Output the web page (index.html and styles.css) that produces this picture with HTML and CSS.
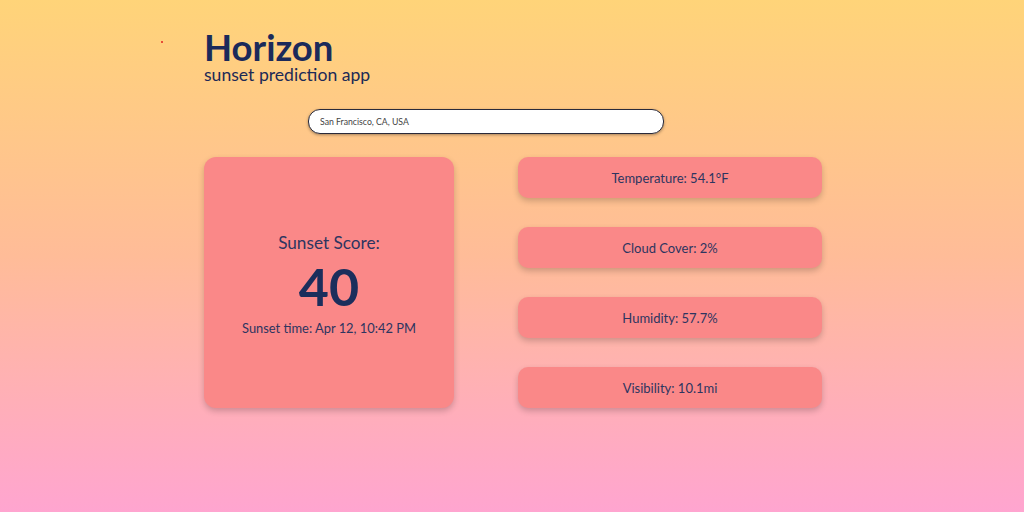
FILE: index.html
```html
<!DOCTYPE html>
<html>
<head>
<meta charset="utf-8">
<link rel="stylesheet" href="styles.css">
</head>
<body>
<div class="page">
  <span class="dot"></span>
  <header class="header">
    <h1 class="title">Horizon</h1>
    <p class="subtitle">sunset prediction app</p>
  </header>
  <div class="search-row">
    <input class="search" type="text" value="San Francisco, CA, USA">
  </div>
  <main class="content">
    <section class="score-card">
      <div class="score-label">Sunset Score:</div>
      <div class="score-value">40</div>
      <div class="score-time">Sunset time: Apr 12, 10:42 PM</div>
    </section>
    <section class="stats">
      <div class="stat">Temperature: 54.1°F</div>
      <div class="stat">Cloud Cover: 2%</div>
      <div class="stat">Humidity: 57.7%</div>
      <div class="stat">Visibility: 10.1mi</div>
    </section>
  </main>
</div>
</body>
</html>
```
FILE: styles.css
```css
html, body {
  margin: 0;
  padding: 0;
  height: 100%;
}
body {
  background: linear-gradient(180deg, #ffd479 0%, #ffbc98 50%, #ffa5d0 100%);
  font-family: Lato, "Noto Sans", sans-serif;
  color: #2d3560;
  min-height: 512px;
}
.page {
  position: relative;
  width: 618px;
  margin-left: calc(50% - 308px);
  padding-top: 29px;
}
.dot {
  position: absolute;
  left: -43px;
  top: 41px;
  width: 2px;
  height: 2px;
  border-radius: 50%;
  background: #e02020;
}
.header {
  display: flex;
  flex-direction: column;
}
.title {
  margin: 0;
  font-size: 36.5px;
  font-weight: 700;
  line-height: 36px;
  color: #1b2a5a;
}
.subtitle {
  margin: 0;
  font-size: 17.6px;
  line-height: 20px;
  color: #1d2a56;
}
.search-row {
  display: flex;
  padding-left: 104px;
  margin-top: 24px;
}
.search {
  box-sizing: border-box;
  width: 356px;
  height: 25px;
  border: 1px solid #2a2a3a;
  border-radius: 12px;
  background: #fff;
  padding: 0 11px;
  font-family: Lato, sans-serif;
  font-size: 8.7px;
  color: #444;
  box-shadow: 0 1px 3px rgba(0, 0, 0, 0.35);
  outline: none;
}
.content {
  display: flex;
  gap: 64px;
  margin-top: 23px;
}
.score-card {
  box-sizing: border-box;
  width: 250px;
  height: 251px;
  background: #fa8888;
  border-radius: 12px;
  box-shadow: 0 3px 6px rgba(0, 0, 0, 0.2);
  display: flex;
  flex-direction: column;
  align-items: center;
  justify-content: center;
  padding-top: 4px;
}
.score-label {
  font-size: 17.2px;
  line-height: 22px;
}
.score-value {
  font-size: 52px;
  font-weight: 700;
  line-height: 56px;
  color: #1b2e5c;
  margin-top: 4px;
}
.score-time {
  font-size: 12.9px;
  line-height: 17px;
  margin-top: 6px;
}
.stats {
  display: flex;
  flex-direction: column;
  gap: 29px;
}
.stat {
  width: 304px;
  height: 41px;
  background: #fa8888;
  border-radius: 10px;
  box-shadow: 0 3px 6px rgba(0, 0, 0, 0.2);
  display: flex;
  align-items: center;
  justify-content: center;
  font-size: 13px;
  padding-top: 1px;
  box-sizing: border-box;
}
```
